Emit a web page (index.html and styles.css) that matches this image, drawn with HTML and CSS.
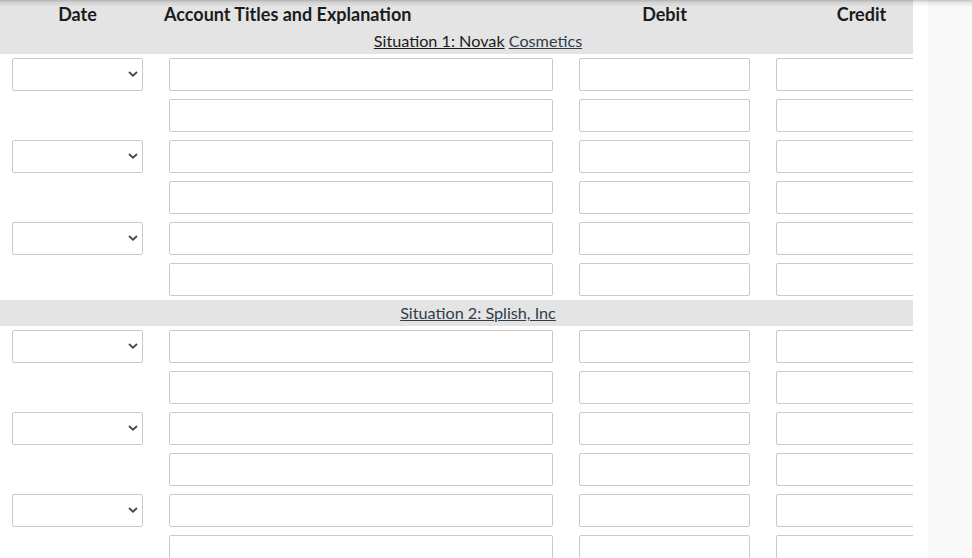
FILE: index.html
```html
<!DOCTYPE html>
<html>
<head>
<meta charset="utf-8">
<link rel="stylesheet" href="styles.css">
</head>
<body>
<div class="page">
  <main class="sheet">
    <div class="head">
      <div class="cols">
        <div class="hc hc-date">Date</div>
        <div class="hc hc-acct">Account Titles and Explanation</div>
        <div class="hc hc-debit">Debit</div>
        <div class="hc hc-credit">Credit</div>
      </div>
      <div class="situation first"><span class="dark">Situation 1: Novak</span> <span class="link">Cosmetics</span></div>
    </div>

    <div class="rows">
      <div class="row"><div class="c1"><div class="sel"><select></select><svg class="chev" width="10" height="6" viewBox="0 0 10 6"><path d="M1 1 L5 4.6 L9 1" fill="none" stroke="#4a4a4a" stroke-width="1.9"/></svg></div></div><div class="c2"><input class="inp"></div><div class="c3"><input class="inp"></div><div class="c4"><input class="inp"></div></div>
      <div class="row"><div class="c1"></div><div class="c2"><input class="inp"></div><div class="c3"><input class="inp"></div><div class="c4"><input class="inp"></div></div>
      <div class="row"><div class="c1"><div class="sel"><select></select><svg class="chev" width="10" height="6" viewBox="0 0 10 6"><path d="M1 1 L5 4.6 L9 1" fill="none" stroke="#4a4a4a" stroke-width="1.9"/></svg></div></div><div class="c2"><input class="inp"></div><div class="c3"><input class="inp"></div><div class="c4"><input class="inp"></div></div>
      <div class="row"><div class="c1"></div><div class="c2"><input class="inp"></div><div class="c3"><input class="inp"></div><div class="c4"><input class="inp"></div></div>
      <div class="row"><div class="c1"><div class="sel"><select></select><svg class="chev" width="10" height="6" viewBox="0 0 10 6"><path d="M1 1 L5 4.6 L9 1" fill="none" stroke="#4a4a4a" stroke-width="1.9"/></svg></div></div><div class="c2"><input class="inp"></div><div class="c3"><input class="inp"></div><div class="c4"><input class="inp"></div></div>
      <div class="row"><div class="c1"></div><div class="c2"><input class="inp"></div><div class="c3"><input class="inp"></div><div class="c4"><input class="inp"></div></div>
    </div>

    <div class="band"><span class="link">Situation 2: Splish, Inc</span></div>

    <div class="rows">
      <div class="row"><div class="c1"><div class="sel"><select></select><svg class="chev" width="10" height="6" viewBox="0 0 10 6"><path d="M1 1 L5 4.6 L9 1" fill="none" stroke="#4a4a4a" stroke-width="1.9"/></svg></div></div><div class="c2"><input class="inp"></div><div class="c3"><input class="inp"></div><div class="c4"><input class="inp"></div></div>
      <div class="row"><div class="c1"></div><div class="c2"><input class="inp"></div><div class="c3"><input class="inp"></div><div class="c4"><input class="inp"></div></div>
      <div class="row"><div class="c1"><div class="sel"><select></select><svg class="chev" width="10" height="6" viewBox="0 0 10 6"><path d="M1 1 L5 4.6 L9 1" fill="none" stroke="#4a4a4a" stroke-width="1.9"/></svg></div></div><div class="c2"><input class="inp"></div><div class="c3"><input class="inp"></div><div class="c4"><input class="inp"></div></div>
      <div class="row"><div class="c1"></div><div class="c2"><input class="inp"></div><div class="c3"><input class="inp"></div><div class="c4"><input class="inp"></div></div>
      <div class="row"><div class="c1"><div class="sel"><select></select><svg class="chev" width="10" height="6" viewBox="0 0 10 6"><path d="M1 1 L5 4.6 L9 1" fill="none" stroke="#4a4a4a" stroke-width="1.9"/></svg></div></div><div class="c2"><input class="inp"></div><div class="c3"><input class="inp"></div><div class="c4"><input class="inp"></div></div>
      <div class="row"><div class="c1"></div><div class="c2"><input class="inp"></div><div class="c3"><input class="inp"></div><div class="c4"><input class="inp"></div></div>
    </div>
  </main>
  <div class="gap"></div>
  <aside class="side"></aside>
</div>
<div class="topshadow"></div>
</body>
</html>
```

FILE: styles.css
```css
html, body {
  margin: 0;
  padding: 0;
  height: 100%;
  overflow: hidden;
  background: #fff;
}
body {
  font-family: Lato, "Open Sans", sans-serif;
  color: #1b1b1b;
}
.page {
  display: flex;
  height: 558px;
}
.sheet {
  width: 913px;
  flex: none;
  overflow: hidden;
}
.gap {
  width: 15px;
  flex: none;
  background: #fff;
}
.side {
  flex: 1;
  background: #f9f9f9;
}
.topshadow {
  position: fixed;
  left: 0;
  top: 0;
  right: 0;
  height: 7px;
  background: linear-gradient(to bottom, rgba(0,0,0,0.22), rgba(0,0,0,0.08) 35%, rgba(0,0,0,0));
  pointer-events: none;
}
.head {
  background: #e4e4e4;
  height: 54px;
}
.cols, .row {
  display: grid;
  grid-template-columns: 155px 411px 197px 197px;
  width: 960px;
}
.hc {
  font-weight: 700;
  font-size: 18px;
  line-height: 18px;
  padding-top: 5px;
}
.hc-date, .hc-debit, .hc-credit {
  text-align: center;
}
.hc-acct {
  padding-left: 9px;
}
.situation {
  text-align: center;
  font-size: 16.2px;
  line-height: 18px;
  padding-top: 9px;
  width: 956px;
}
.dark {
  color: #1b1b1b;
  text-decoration: underline;
}
.link {
  color: #2e3d4c;
  text-decoration: underline;
}
.row {
  height: 41px;
  align-items: start;
}
.c1, .c2, .c3, .c4 {
  padding-top: 4px;
}
.c1 { padding-left: 12px; }
.c2 { padding-left: 14px; }
.c3 { padding-left: 13px; }
.c4 { padding-left: 13px; }
.inp {
  display: block;
  box-sizing: border-box;
  height: 33px;
  margin: 0;
  border: 1px solid #c9c9c9;
  border-radius: 2px;
  background: #fff;
  padding: 0 6px;
  font: inherit;
  outline: none;
}
.c2 .inp { width: 384px; }
.c3 .inp { width: 171px; }
.c4 .inp { width: 171px; }
.sel {
  position: relative;
  width: 131px;
  height: 33px;
}
.sel select {
  appearance: none;
  -webkit-appearance: none;
  box-sizing: border-box;
  width: 131px;
  height: 33px;
  margin: 0;
  border: 1px solid #c9c9c9;
  border-radius: 2px;
  background: #fff;
  font: inherit;
  outline: none;
}
.chev {
  position: absolute;
  left: 116px;
  top: 13px;
  pointer-events: none;
}
.band {
  background: #e4e4e4;
  height: 26px;
  width: 956px;
  text-align: center;
  font-size: 16.2px;
  line-height: 26px;
}
```
